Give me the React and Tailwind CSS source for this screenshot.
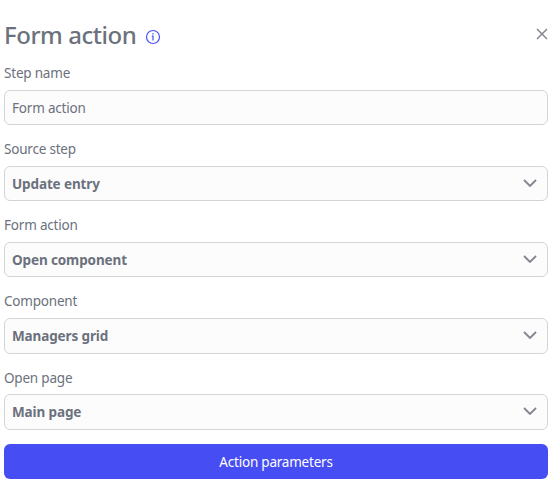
const selects = [
  { label: "Source step", value: "Update entry", labelGap: "mb-[7px]", height: "h-[35px]" },
  { label: "Form action", value: "Open component", labelGap: "mb-[7px]", height: "h-[35px]" },
  { label: "Component", value: "Managers grid", labelGap: "mb-[7px]", height: "h-9 pb-px" },
  { label: "Open page", value: "Main page", labelGap: "mb-[6px]", height: "h-9 pb-px" },
];

function Label({ children, gap = "mb-[7px]" }) {
  return <div className={`${gap} h-5 text-[13.5px] leading-5 tracking-[-0.2px]`}>{children}</div>;
}

export default function App() {
  return (
    <div className="h-[495px] w-[554px] bg-white pl-1 pr-[6px] pt-[18px] font-['Noto_Sans','Open_Sans',sans-serif] text-[#6b717d]">
      <header className="flex h-[34px] items-center">
        <h1 className="w-[133px] whitespace-nowrap text-[24px] font-[550] leading-[34px] tracking-[-0.46px]">Form action</h1>
        <svg className="ml-2 mt-1 shrink-0" width="16" height="16" viewBox="0 0 16 16" fill="none" stroke="#4950f6" strokeWidth="1.2">
          <circle cx="8" cy="8" r="6.5" />
          <path d="M6.8 7.2H8v4.2M7.3 4.8h1.3" />
        </svg>
        <svg className="mb-[2px] ml-auto" width="12" height="12" viewBox="0 0 12 12" fill="none" stroke="#7b808b" strokeWidth="1.4">
          <path d="M1 1l10 10M11 1L1 11" />
        </svg>
      </header>
      <div className="mt-[11px]">
        <Label>Step name</Label>
        <div className="mb-[14px] flex h-[35px] items-center rounded-md border border-[#d2d4d9] bg-[#fcfcfc] px-[7px] text-[13.5px] tracking-[-0.2px]">
          <span className="pt-[2px] leading-[21px]">Form action</span>
        </div>
      </div>
      {selects.map((s) => (
        <div key={s.label} className="mb-[14px]">
          <Label gap={s.labelGap}>{s.label}</Label>
          <div className={`${s.height} flex items-center justify-between rounded-md border border-[#d2d4d9] bg-[#fcfcfc] pl-[7px] pr-[10px] text-[13.5px] font-bold tracking-[-0.12px]`}>
            <span className="pt-[2px] leading-[21px]">{s.value}</span>
            <svg className="mb-px" width="14" height="8" viewBox="0 0 14 8" fill="none" stroke="#81858f" strokeWidth="1.8">
              <path d="M1 1l6 6 6-6" />
            </svg>
          </div>
        </div>
      ))}
      <button className="block h-[35px] w-full rounded-md bg-[#464df2] pt-[2px] text-[13.5px] leading-[21px] tracking-[-0.22px] text-white">Action parameters</button>
    </div>
  );
}
